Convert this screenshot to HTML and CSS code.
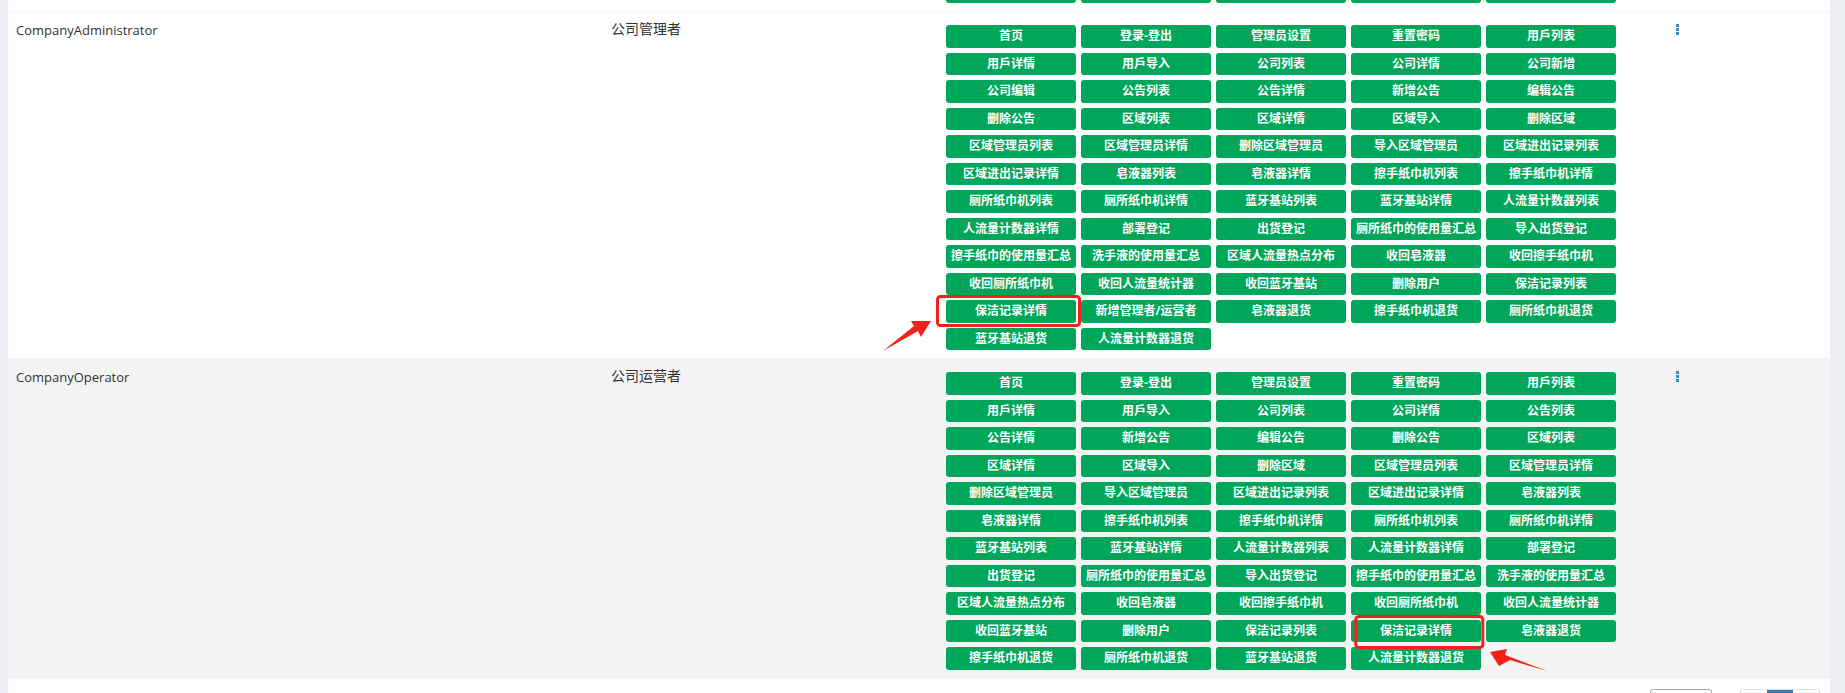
FILE: index.html
```html
<!DOCTYPE html>
<html lang="zh-CN">
<head>
    <meta charset="UTF-8">
    <meta name="viewport" content="width=device-width, initial-scale=1.0">
    <title>角色列表</title>
    <link rel="stylesheet" href="styles.css">
</head>
<body>
    <div class="box">
        <!-- 上一行，只露出按钮底部 -->
        <div class="row row-prev">
            <div class="perm-grid">
                <span class="perm">&nbsp;</span><span class="perm">&nbsp;</span><span class="perm">&nbsp;</span><span class="perm">&nbsp;</span><span class="perm">&nbsp;</span>
            </div>
        </div>

        <div class="row">
            <div class="cell cell-name">CompanyAdministrator</div>
            <div class="cell cell-title">公司管理者</div>
            <div class="perm-grid">
                <span class="perm">首页</span>
                <span class="perm">登录-登出</span>
                <span class="perm">管理员设置</span>
                <span class="perm">重置密码</span>
                <span class="perm">用戶列表</span>
                <span class="perm">用戶详情</span>
                <span class="perm">用戶导入</span>
                <span class="perm">公司列表</span>
                <span class="perm">公司详情</span>
                <span class="perm">公司新增</span>
                <span class="perm">公司编辑</span>
                <span class="perm">公告列表</span>
                <span class="perm">公告详情</span>
                <span class="perm">新增公告</span>
                <span class="perm">编辑公告</span>
                <span class="perm">删除公告</span>
                <span class="perm">区域列表</span>
                <span class="perm">区域详情</span>
                <span class="perm">区域导入</span>
                <span class="perm">删除区域</span>
                <span class="perm">区域管理员列表</span>
                <span class="perm">区域管理员详情</span>
                <span class="perm">删除区域管理员</span>
                <span class="perm">导入区域管理员</span>
                <span class="perm">区域进出记录列表</span>
                <span class="perm">区域进出记录详情</span>
                <span class="perm">皂液器列表</span>
                <span class="perm">皂液器详情</span>
                <span class="perm">擦手纸巾机列表</span>
                <span class="perm">擦手纸巾机详情</span>
                <span class="perm">厕所纸巾机列表</span>
                <span class="perm">厕所纸巾机详情</span>
                <span class="perm">蓝牙基站列表</span>
                <span class="perm">蓝牙基站详情</span>
                <span class="perm">人流量计数器列表</span>
                <span class="perm">人流量计数器详情</span>
                <span class="perm">部署登记</span>
                <span class="perm">出货登记</span>
                <span class="perm">厕所纸巾的使用量汇总</span>
                <span class="perm">导入出货登记</span>
                <span class="perm">擦手纸巾的使用量汇总</span>
                <span class="perm">洗手液的使用量汇总</span>
                <span class="perm">区域人流量热点分布</span>
                <span class="perm">收回皂液器</span>
                <span class="perm">收回擦手纸巾机</span>
                <span class="perm">收回厕所纸巾机</span>
                <span class="perm">收回人流量统计器</span>
                <span class="perm">收回蓝牙基站</span>
                <span class="perm">删除用户</span>
                <span class="perm">保洁记录列表</span>
                <span class="perm">保洁记录详情</span>
                <span class="perm">新增管理者/运营者</span>
                <span class="perm">皂液器退货</span>
                <span class="perm">擦手纸巾机退货</span>
                <span class="perm">厕所纸巾机退货</span>
                <span class="perm">蓝牙基站退货</span>
                <span class="perm">人流量计数器退货</span>
            </div>
            <div class="cell"><span class="kebab"><i></i><i></i><i></i></span></div>
        </div>

        <div class="row row-odd">
            <div class="cell cell-name">CompanyOperator</div>
            <div class="cell cell-title">公司运营者</div>
            <div class="perm-grid">
                <span class="perm">首页</span>
                <span class="perm">登录-登出</span>
                <span class="perm">管理员设置</span>
                <span class="perm">重置密码</span>
                <span class="perm">用戶列表</span>
                <span class="perm">用戶详情</span>
                <span class="perm">用戶导入</span>
                <span class="perm">公司列表</span>
                <span class="perm">公司详情</span>
                <span class="perm">公告列表</span>
                <span class="perm">公告详情</span>
                <span class="perm">新增公告</span>
                <span class="perm">编辑公告</span>
                <span class="perm">删除公告</span>
                <span class="perm">区域列表</span>
                <span class="perm">区域详情</span>
                <span class="perm">区域导入</span>
                <span class="perm">删除区域</span>
                <span class="perm">区域管理员列表</span>
                <span class="perm">区域管理员详情</span>
                <span class="perm">删除区域管理员</span>
                <span class="perm">导入区域管理员</span>
                <span class="perm">区域进出记录列表</span>
                <span class="perm">区域进出记录详情</span>
                <span class="perm">皂液器列表</span>
                <span class="perm">皂液器详情</span>
                <span class="perm">擦手纸巾机列表</span>
                <span class="perm">擦手纸巾机详情</span>
                <span class="perm">厕所纸巾机列表</span>
                <span class="perm">厕所纸巾机详情</span>
                <span class="perm">蓝牙基站列表</span>
                <span class="perm">蓝牙基站详情</span>
                <span class="perm">人流量计数器列表</span>
                <span class="perm">人流量计数器详情</span>
                <span class="perm">部署登记</span>
                <span class="perm">出货登记</span>
                <span class="perm">厕所纸巾的使用量汇总</span>
                <span class="perm">导入出货登记</span>
                <span class="perm">擦手纸巾的使用量汇总</span>
                <span class="perm">洗手液的使用量汇总</span>
                <span class="perm">区域人流量热点分布</span>
                <span class="perm">收回皂液器</span>
                <span class="perm">收回擦手纸巾机</span>
                <span class="perm">收回厕所纸巾机</span>
                <span class="perm">收回人流量统计器</span>
                <span class="perm">收回蓝牙基站</span>
                <span class="perm">删除用户</span>
                <span class="perm">保洁记录列表</span>
                <span class="perm">保洁记录详情</span>
                <span class="perm">皂液器退货</span>
                <span class="perm">擦手纸巾机退货</span>
                <span class="perm">厕所纸巾机退货</span>
                <span class="perm">蓝牙基站退货</span>
                <span class="perm">人流量计数器退货</span>
            </div>
            <div class="cell"><span class="kebab"><i></i><i></i><i></i></span></div>
        </div>

        <!-- 分页 -->
        <div class="box-footer">
            <span class="page-size">&nbsp;</span>
            <div class="pagination">
                <span class="page-item">&nbsp;</span>
                <span class="page-item active">&nbsp;</span>
                <span class="page-item">&nbsp;</span>
            </div>
        </div>
    </div>

    <!-- 截图上的红色标注 -->
    <svg class="marks" width="1845" height="693" viewBox="0 0 1845 693">
        <rect class="mark-box" x="937.5" y="296.5" width="142" height="29" rx="3"/>
        <rect class="mark-box" x="1355.8" y="616.5" width="127" height="31" rx="3"/>
        <polygon class="mark-arrow" points="883,351 914,326 911,321 931,321 921,337 918,331"/>
        <polygon class="mark-arrow" points="1490,652 1507,649 1505,655 1547,671 1510,660 1499,666"/>
    </svg>
</body>
</html>
```

FILE: styles.css
```css
html, body {
    height: 100%;
    overflow: hidden;
}
body {
    margin: 0;
    padding: 0 15px 0 8px;
    font-family: "Open Sans", "Noto Sans CJK SC", sans-serif;
    font-size: 13px;
    color: #333;
    background-color: #ecf0f5;
}
.box {
    background: white;
    height: 100%;
    overflow: hidden;
}
.row {
    display: grid;
    grid-template-columns: 595px 335px 730px 1fr;
    border-top: 1px solid #f4f4f4;
    padding: 8px 0;
}
.row-odd {
    background: #f4f4f4;
    padding-bottom: 9.5px;
}
.row-prev {
    display: block;
    border-top: 0;
    height: 11px;
    padding: 0;
    overflow: hidden;
}
.row-prev .perm-grid {
    margin: -24.5px 0 0 930px;
}
.cell {
    padding: 0 8px;
}
.cell-name {
    padding-top: 1px;
}
.cell-title {
    font-size: 14px;
    line-height: 18px;
}
.perm-grid {
    display: grid;
    grid-template-columns: repeat(5, 130px);
    column-gap: 5px;
    padding: 5px 8px 0;
}
.perm {
    display: block;
    height: 22.5px;
    margin-bottom: 5px;
    line-height: 22px;
    background: #00a65a;
    color: white;
    font-size: 12px;
    font-weight: bold;
    text-align: center;
    white-space: nowrap;
    border-radius: 3px;
}
.perm:nth-last-child(-n+5) {
    margin-bottom: 0;
}
.kebab {
    display: flex;
    flex-direction: column;
    gap: 1px;
    margin-top: 4px;
}
.kebab i {
    display: block;
    width: 3px;
    height: 3px;
    background: #3c8dbc;
}
.box-footer {
    display: flex;
    justify-content: flex-end;
    align-items: flex-start;
    padding: 10px 10px 0 0;
}
.page-size {
    width: 60px;
    height: 30px;
    margin-right: 28px;
    border: 1px solid #aaa;
    border-radius: 3px;
}
.pagination {
    display: flex;
    border: 1px solid #ddd;
    border-radius: 3px;
}
.page-item {
    width: 26px;
    height: 30px;
}
.page-item.active {
    background: #337ab7;
}
.marks {
    position: absolute;
    top: 0;
    left: 0;
    pointer-events: none;
}
.mark-box {
    fill: none;
    stroke: #f5201a;
    stroke-width: 3;
}
.mark-arrow {
    fill: #f5201a;
}
```
